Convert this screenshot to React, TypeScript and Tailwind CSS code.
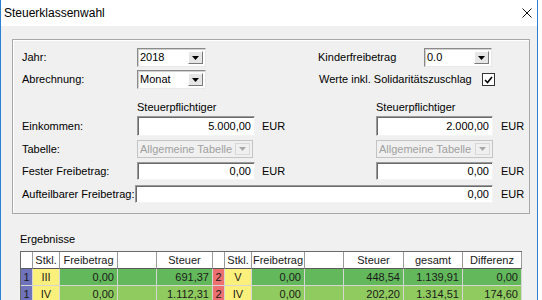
import React from 'react'

const ui = { fontFamily: "'Liberation Sans', Arial, sans-serif" }
const grid = { fontFamily: "'Liberation Sans Narrow', 'Arial Narrow', 'Liberation Sans', sans-serif" }

function Arrow({ disabled }: { disabled?: boolean }) {
  return (
    <svg width="7" height="4" viewBox="0 0 7 4">
      <path d="M0 0h7L3.5 4z" fill={disabled ? '#a8a8a8' : '#000'} />
    </svg>
  )
}

function Select({ value, w, disabled }: { value: string; w: string; disabled?: boolean }) {
  return (
    <div
      className={`${w} h-full flex items-center border ${
        disabled
          ? 'border-[#c4c4c4] bg-[#f0f0f0] text-[#a0a0a0]'
          : 'border-t-[#8a8a8a] border-l-[#8a8a8a] border-b-[#e8e8e8] border-r-[#e8e8e8] bg-white text-black shadow-[inset_1px_1px_0_#d0d0d0]'
      }`}
    >
      <span className="flex-1 pl-[2px] leading-none truncate">{value}</span>
      <div
        className={`w-[15px] h-[calc(100%-4px)] mr-[2px] flex items-center justify-center border ${
          disabled
            ? 'border-[#d8d8d8] bg-[#f0f0f0]'
            : 'border-t-white border-l-white border-b-[#7a7a7a] border-r-[#7a7a7a] bg-[#e6e6e6]'
        }`}
      >
        <Arrow disabled={disabled} />
      </div>
    </div>
  )
}

function Input({ value, w }: { value: string; w: string }) {
  return (
    <div className={`${w} h-full flex items-center justify-end pr-[3px] bg-white border border-t-[#9a9a9a] border-l-[#9a9a9a] border-b-[#f4f4f4] border-r-[#f4f4f4] shadow-[inset_1px_1px_0_#6a6a6a]`}>
      {value}
    </div>
  )
}

const cols = 'grid-cols-[12px_27px_58px_39px_56px_12px_27px_53px_39px_60px_59px_59px]'
const head = ['', 'Stkl.', 'Freibetrag', '', 'Steuer', '', 'Stkl.', 'Freibetrag', '', 'Steuer', 'gesamt', 'Differenz']

const rows = [
  { n: '1', a: 'III', b: 'V', g: 'bg-[#62b85b]', v: ['0,00', '691,37', '0,00', '448,54', '1.139,91', '0,00'] },
  { n: '1', a: 'IV', b: 'IV', g: 'bg-[#8fcb5f]', v: ['0,00', '1.112,31', '0,00', '202,20', '1.314,51', '174,60'] },
]

function Row({ r }: { r: (typeof rows)[number] }) {
  const c = 'h-[17px] border-r border-b border-[#d6d6d6] flex items-center'
  const num = `${c} ${r.g} justify-end pr-[3px]`
  return (
    <>
      <div className={`${c} bg-[#6f73bc] justify-center`}>{r.n}</div>
      <div className={`${c} bg-[#fcf07c] justify-center`}>{r.a}</div>
      <div className={num}>{r.v[0]}</div>
      <div className={`${c} ${r.g}`} />
      <div className={num}>{r.v[1]}</div>
      <div className={`${c} bg-[#ec7070] justify-center`}>2</div>
      <div className={`${c} bg-[#fcf07c] justify-center`}>{r.b}</div>
      <div className={num}>{r.v[2]}</div>
      <div className={`${c} ${r.g}`} />
      <div className={num}>{r.v[3]}</div>
      <div className={num}>{r.v[4]}</div>
      <div className={num}>{r.v[5]}</div>
    </>
  )
}

export default function App() {
  return (
    <div className="w-[542px] h-[300px] bg-white flex overflow-hidden text-[11px] text-black" style={ui}>
      <div className="w-[538px] h-full border-l border-r border-[#2a80d2] flex flex-col">
        <div className="h-[26px] shrink-0 bg-white flex items-center justify-between pl-[3px] pr-[5px]">
          <span className="text-[12px]">Steuerklassenwahl</span>
          <svg width="10" height="10" viewBox="0 0 10 10">
            <path d="M0.5 0.5l9 9M9.5 0.5l-9 9" stroke="#111" strokeWidth="1" />
          </svg>
        </div>
        <div className="flex-1 min-h-0 overflow-hidden bg-[#f0f0f0] pl-[11px] pt-[13px]">
          <div className="w-[518px] border border-[#a8a8a8] shadow-[inset_1px_1px_0_#fff] pl-[9px] pt-[8px] pb-[10px]">
            <div className="h-[19px] flex items-center">
              <span className="w-[115px]">Jahr:</span>
              <Select value="2018" w="w-[69px]" />
              <span className="ml-[112px] w-[106px]">Kinderfreibetrag</span>
              <Select value="0.0" w="w-[68px]" />
            </div>
            <div className="mt-[3px] h-[19px] flex items-center">
              <span className="w-[115px]">Abrechnung:</span>
              <Select value="Monat" w="w-[69px]" />
              <span className="ml-[113px] w-[163px]">Werte inkl. Solidaritätszuschlag</span>
              <div className="w-[13px] h-[13px] bg-white border border-[#333] flex items-center justify-center">
                <svg width="9" height="8" viewBox="0 0 9 8">
                  <path d="M1 4l2.5 2.5L8 1" stroke="#000" strokeWidth="1.6" fill="none" />
                </svg>
              </div>
            </div>
            <div className="mt-[11px] h-[14px] flex items-center">
              <span className="w-[115px]" />
              <span className="w-[239px]">Steuerpflichtiger</span>
              <span>Steuerpflichtiger</span>
            </div>
            <div className="mt-[2px] h-[20px] flex items-center">
              <span className="w-[115px]">Einkommen:</span>
              <Input value="5.000,00" w="w-[118px]" />
              <span className="w-[121px] pl-[7px]">EUR</span>
              <Input value="2.000,00" w="w-[117px]" />
              <span className="pl-[8px]">EUR</span>
            </div>
            <div className="mt-[4px] h-[18px] flex items-center">
              <span className="w-[115px]">Tabelle:</span>
              <Select value="Allgemeine Tabelle" w="w-[116px]" disabled />
              <span className="w-[123px]" />
              <Select value="Allgemeine Tabelle" w="w-[117px]" disabled />
            </div>
            <div className="mt-[4px] h-[18px] flex items-center">
              <span className="w-[115px]">Fester Freibetrag:</span>
              <Input value="0,00" w="w-[118px]" />
              <span className="w-[121px] pl-[7px]">EUR</span>
              <Input value="0,00" w="w-[117px]" />
              <span className="pl-[8px]">EUR</span>
            </div>
            <div className="mt-[5px] h-[18px] flex items-center">
              <span className="w-[113px]">Aufteilbarer Freibetrag:</span>
              <Input value="0,00" w="w-[358px]" />
              <span className="pl-[8px]">EUR</span>
            </div>
          </div>
          <div className="mt-[18px] ml-[8px] h-[14px] flex items-center">Ergebnisse</div>
          <div
            className={`mt-[5px] ml-[8px] w-max grid ${cols} border-l border-t border-[#6a6a6a] text-[11px] text-[#1a1a1a]`}
            style={grid}
          >
            {head.map((h, i) => (
              <div
                key={i}
                className="h-[17px] bg-white border-r border-b border-r-[#9a9a9a] border-b-[#5a5a5a] shadow-[inset_1px_1px_0_#fff] flex items-center justify-center"
              >
                {h}
              </div>
            ))}
            {rows.map((r, i) => (
              <Row key={i} r={r} />
            ))}
          </div>
        </div>
      </div>
    </div>
  )
}
